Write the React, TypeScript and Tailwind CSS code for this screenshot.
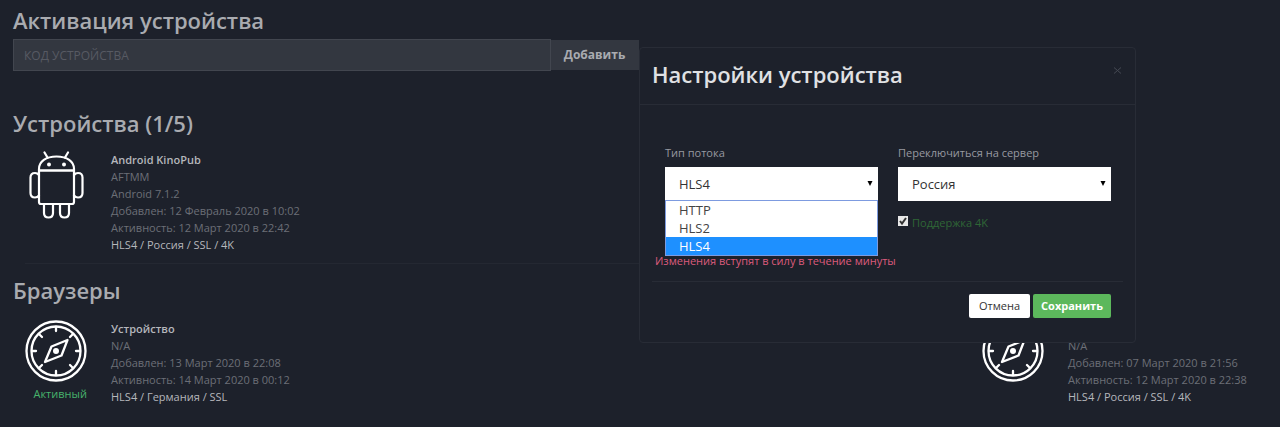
import { useState } from 'react';

interface Device {
  name: string;
  details: string[];
  settings: string;
  icon: 'android' | 'browser';
  active?: boolean;
}

const devices: Device[] = [
  {
    name: 'Android KinoPub',
    details: ['AFTMM', 'Android 7.1.2', 'Добавлен: 12 Февраль 2020 в 10:02', 'Активность: 12 Март 2020 в 22:42'],
    settings: 'HLS4 / Россия / SSL / 4K',
    icon: 'android',
  },
];

const browsers: Device[] = [
  {
    name: 'Устройство',
    details: ['N/A', 'Добавлен: 13 Март 2020 в 22:08', 'Активность: 14 Март 2020 в 00:12'],
    settings: 'HLS4 / Германия / SSL',
    icon: 'browser',
    active: true,
  },
  {
    name: 'Устройство',
    details: ['N/A', 'Добавлен: 07 Март 2020 в 21:56', 'Активность: 12 Март 2020 в 22:38'],
    settings: 'HLS4 / Россия / SSL / 4K',
    icon: 'browser',
  },
];

const streamTypes = ['HTTP', 'HLS2', 'HLS4'];

function AndroidIcon() {
  return (
    <svg className="w-[62px] h-[68px]" viewBox="0 0 62 68" fill="none" stroke="white" strokeWidth={2.2} strokeLinecap="round" strokeLinejoin="round">
      <path d="M14 19.500V18C14 10.500 21 5.500 31.500 5.500S49 10.500 49 18V19.500Z" />
      <path d="M22.500 6.500L19.500 1.500M40 6.500L43 1.500" />
      <path d="M14 19.500H49V51Q49 53 47 53H16Q14 53 14 51Z" />
      <path d="M14 24Q12.500 22 10 22Q5.500 22 5.500 26.500V42Q5.500 46.500 10 46.500Q12.500 46.500 14 44.500" />
      <path d="M49 24Q50.500 22 53 22Q57.500 22 57.500 26.500V42Q57.500 46.500 53 46.500Q50.500 46.500 49 44.500" />
      <path d="M19 53V62Q19 66.500 23.500 66.500T28 62V53M35 53V62Q35 66.500 39.500 66.500T44 62V53" />
      <circle cx="24" cy="13.500" r="2" fill="white" stroke="none" />
      <circle cx="39" cy="13.500" r="2" fill="white" stroke="none" />
    </svg>
  );
}

function CompassIcon() {
  return (
    <svg className="w-[62px] h-[62px]" viewBox="0 0 62 62" fill="none" stroke="white" strokeWidth={2.3} strokeLinecap="round" strokeLinejoin="round">
      <circle cx="31" cy="31" r="29.500" />
      <circle cx="31" cy="31" r="24.500" />
      <path d="M31 7V11M31 51V55M7 31H11M51 31H55M14.500 14.500L17 17M45 45L47.500 47.500M14.500 47.500L17 45M45 17L47.500 14.500" />
      <path d="M42.500 20L26.500 26.500L20 42L36.500 35.500Z" />
      <circle cx="31" cy="31" r="3" fill="white" stroke="none" />
    </svg>
  );
}

function DeviceCard({ device }: { device: Device }) {
  return (
    <article className="flex w-[298px] gap-6">
      <div className="flex flex-col w-[62px]">
        {device.icon === 'android' ? <AndroidIcon /> : <CompassIcon />}
        {device.active && <span className="mt-1 self-end text-[11px] leading-4 text-[#47b36b]">Активный</span>}
      </div>
      <div className="text-[11px] leading-[17px] text-[#6c6f77] whitespace-nowrap">
        <h3 className="font-semibold text-[#b5b7bc]">{device.name}</h3>
        {device.details.map((line) => (
          <p key={line}>{line}</p>
        ))}
        <p className="text-[#b5b7bc]">{device.settings}</p>
      </div>
    </article>
  );
}

function SettingsDialog() {
  const [stream, setStream] = useState('HLS4');

  return (
    <div
      role="dialog"
      aria-labelledby="dialog-title"
      className="absolute left-1/2 top-[47px] w-[497px] -ml-px rounded-sm border border-[#282c36] bg-[#1d212b]"
    >
      <header className="flex items-start justify-between h-[57px] px-3 pt-3 border-b border-[#282c36]">
        <h2 id="dialog-title" className="text-[22px] leading-7 font-semibold text-[#e0e1e4]">Настройки устройства</h2>
        <button type="button" aria-label="Закрыть" className="flex items-center justify-center w-3 h-5 text-[#454953]">
          <svg className="w-[9px] h-[9px]" viewBox="0 0 9 9" fill="none" stroke="currentColor" strokeWidth={1}>
            <path d="M1 1.500L8 7.500M8 1.500L1 7.500" />
          </svg>
        </button>
      </header>

      <div className="px-3 pt-10">
        <div className="grid grid-cols-2 gap-5 pl-[13px] pr-3">
          <div>
            <label htmlFor="stream" className="block h-[22px] text-[11px] leading-4 text-[#9799a0]">Тип потока</label>
            <div className="relative">
              <select
                id="stream"
                value={stream}
                onChange={(e) => setStream(e.target.value)}
                className="block w-full h-[34px] pl-[14px] pt-0.5 appearance-none bg-white text-[13px] text-[#333] outline-none"
              >
                {streamTypes.map((type) => (
                  <option key={type}>{type}</option>
                ))}
              </select>
              <SelectArrow />
              <ul role="listbox" aria-label="Тип потока" className="absolute z-10 left-0 top-[33px] w-full border border-[#7d9be0] bg-white text-[13px] leading-[18px] text-[#444]">
                {streamTypes.map((type) => (
                  <li
                    key={type}
                    role="option"
                    aria-selected={type === stream}
                    onClick={() => setStream(type)}
                    className="pl-[13px] aria-selected:bg-[#1e90ff] aria-selected:text-white"
                  >
                    {type}
                  </li>
                ))}
              </ul>
            </div>
          </div>

          <div>
            <label htmlFor="server" className="block h-[22px] text-[11px] leading-4 text-[#9799a0]">Переключиться на сервер</label>
            <div className="relative">
              <select id="server" className="block w-full h-[34px] pl-[14px] pt-0.5 appearance-none bg-white text-[13px] text-[#333] outline-none">
                <option>Россия</option>
                <option>Германия</option>
              </select>
              <SelectArrow />
            </div>
            <label className="flex items-center gap-1 mt-[14px] text-[11px] leading-4 text-[#2f6636]">
              <span className="relative mb-1 w-[10px] h-[10px]">
                <input type="checkbox" defaultChecked className="peer block w-full h-full appearance-none bg-[#e8e8e8]" />
                <svg className="absolute inset-0 w-[10px] h-[10px] pointer-events-none opacity-0 peer-checked:opacity-100" viewBox="0 0 10 10" fill="none" stroke="#333" strokeWidth={2}>
                  <path d="M2 5L4 7.500L8 2" />
                </svg>
              </span>
              Поддержка 4K
            </label>
          </div>
        </div>

        <p className="mt-[22px] pl-[3px] text-[11px] leading-4 text-[#dc5b7c]">Изменения вступят в силу в течение минуты</p>

        <footer className="flex justify-end gap-[3px] mt-3 pt-3 pr-3 pb-6 border-t border-[#282c36] text-[11px]">
          <button type="button" className="w-[61px] h-6 rounded-xs bg-white text-[#333]">Отмена</button>
          <button type="button" className="w-[78px] h-6 rounded-xs bg-[#5cb85c] font-bold text-white">Сохранить</button>
        </footer>
      </div>
    </div>
  );
}

function SelectArrow() {
  return (
    <svg className="absolute right-[5px] top-[14px] w-[6px] h-[5px] pointer-events-none" viewBox="0 0 6 5" fill="black">
      <path d="M0.500 0H5.500L3 5Z" />
    </svg>
  );
}

export default function App() {
  return (
    <main className="relative min-h-screen overflow-hidden bg-[#1d212b] font-['Open_Sans',sans-serif]">
      <div className="pl-[13px] pt-1.5">
        <h2 className="text-[22px] leading-7 font-semibold text-[#a9abb0]">Активация устройства</h2>
        <form className="flex w-1/2 pr-2 mt-[5px]" onSubmit={(e) => e.preventDefault()}>
          <input
            type="text"
            aria-label="Код устройства"
            placeholder="КОД УСТРОЙСТВА"
            className="flex-1 min-w-0 h-8 px-[10px] border border-[#42464f] bg-[#333740] text-xs text-[#a9abb0] placeholder:text-[#575a63] outline-none"
          />
          <button type="submit" className="w-[88px] h-[30px] mt-px bg-[#333740] text-xs font-bold text-[#a9abb0]">Добавить</button>
        </form>

        <h2 className="mt-[38px] text-[22px] leading-7 font-semibold text-[#a9abb0]">Устройства (1/5)</h2>
        <div className="w-1/2 ml-3 mt-[14px] pb-[10px] border-b border-[#242832]">
          {devices.map((device) => (
            <DeviceCard key={device.name} device={device} />
          ))}
        </div>

        <h2 className="mt-3 text-[22px] leading-7 font-semibold text-[#a9abb0]">Браузеры</h2>
        <div className="flex justify-between ml-3 mt-4">
          {browsers.map((device, i) => (
            <DeviceCard key={i} device={device} />
          ))}
        </div>
      </div>

      <SettingsDialog />
    </main>
  );
}
